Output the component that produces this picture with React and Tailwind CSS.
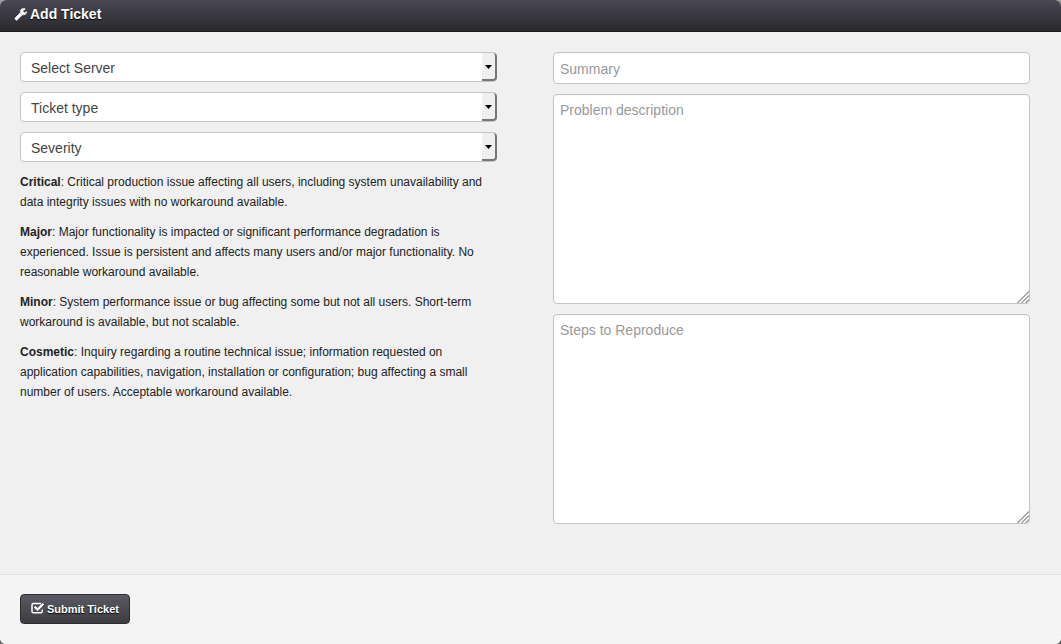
const severities = [
  ["Critical", "Critical production issue affecting all users, including system unavailability and data integrity issues with no workaround available."],
  ["Major", "Major functionality is impacted or significant performance degradation is experienced. Issue is persistent and affects many users and/or major functionality. No reasonable workaround available."],
  ["Minor", "System performance issue or bug affecting some but not all users. Short-term workaround is available, but not scalable."],
  ["Cosmetic", "Inquiry regarding a routine technical issue; information requested on application capabilities, navigation, installation or configuration; bug affecting a small number of users. Acceptable workaround available."],
];

function WrenchIcon() {
  return (
    <svg viewBox="0 0 1792 1792" className="size-3.5" fill="currentColor" aria-hidden="true">
      <path
        stroke="currentColor"
        strokeWidth="90"
        transform="translate(40 60) scale(0.92)"
        d="M1092 1052l-682 682q-37 37-90 37-52 0-91-37l-106-108q-38-36-38-90 0-53 38-91l681-681q39 98 114.5 173.5t173.5 114.5zm634-435q0 39-23 106-47 134-164.5 217.5t-258.5 83.5q-185 0-316.5-131.5t-131.5-316.5 131.5-316.5 316.5-131.5q58 0 121.5 16.5t107.5 46.5q16 11 16 28t-16 28l-293 169v224l193 107q5-3 79-48.5t135.5-81 70.5-35.5q15 0 23.5 10t8.5 25z"
      />
    </svg>
  );
}

function CheckIcon() {
  return (
    <svg viewBox="0 0 14 14" className="size-3.5" fill="none" stroke="currentColor" aria-hidden="true">
      <path d="M10 1.6H2.4Q1 1.6 1 3V9.4Q1 10.8 2.4 10.8H9.8Q11.2 10.8 11.2 9.4V7.4" strokeWidth="1.5" />
      <path d="M3.6 4.8L6.5 7.6L12.4 1.8" strokeWidth="2.2" />
    </svg>
  );
}

function SelectField({ label }) {
  return (
    <div className="relative">
      <select aria-label={label} className="block h-[30px] w-full appearance-none rounded border border-[#c4c4c4] bg-white pt-0.5 pr-6 pl-2.5 text-sm text-[#444]">
        <option>{label}</option>
      </select>
      <span className="pointer-events-none absolute inset-y-px right-0 flex w-[15px] items-center justify-center rounded-r-sm border-r-2 border-b-2 border-[#777] bg-[#efefef] pt-0.5">
        <svg viewBox="0 0 7 4" className="h-1 w-[7px]" fill="#000" aria-hidden="true">
          <path d="M0 0H7L3.5 4Z" />
        </svg>
      </span>
    </div>
  );
}

function TextArea({ label }) {
  return (
    <div className="relative">
      <textarea aria-label={label} placeholder={label} className="block h-[210px] w-full resize-none rounded border border-[#c4c4c4] bg-white px-1.5 py-[5px] text-sm leading-5 text-[#444] shadow-[inset_0_1px_1px_rgba(0,0,0,0.03)] placeholder:text-[#999]" />
      <svg viewBox="0 0 12 12" className="pointer-events-none absolute right-px bottom-px size-3" stroke="#999" strokeWidth="1.3" aria-hidden="true">
        <path d="M0.5 12L12 0.5M4.5 12L12 4.5M8.5 12L12 8.5" />
      </svg>
    </div>
  );
}

export default function App() {
  return (
    <div className="min-h-screen bg-linear-to-b from-[#a0a0a4] to-[#666]">
      <form className="flex min-h-screen flex-col overflow-hidden rounded-md bg-[#f0f0f0] font-['Liberation_Sans',Arial,sans-serif] text-[#222]">
        <header className="flex h-8 items-center gap-0.5 border-b border-[#1b1a20] bg-linear-to-b from-[#4a4854] to-[#29292d] px-3.5 pb-1 text-white">
          <WrenchIcon />
          <h1 className="text-sm font-bold [text-shadow:0_1px_1px_#000]">Add Ticket</h1>
        </header>
        <main className="grid grow grid-cols-2 gap-14 pt-5 pr-[31px] pb-[50px] pl-5">
          <div className="flex flex-col gap-2.5">
            <SelectField label="Select Server" />
            <SelectField label="Ticket type" />
            <SelectField label="Severity" />
            {severities.map(([name, text]) => (
              <p key={name} className="text-xs leading-5">
                <strong>{name}</strong>: {text}
              </p>
            ))}
          </div>
          <div className="flex flex-col gap-2.5">
            <input type="text" aria-label="Summary" placeholder="Summary" className="h-8 w-full rounded border border-[#c4c4c4] bg-white px-1.5 pt-0.5 text-sm text-[#444] shadow-[inset_0_1px_1px_rgba(0,0,0,0.03)] placeholder:text-[#999]" />
            <TextArea label="Problem description" />
            <TextArea label="Steps to Reproduce" />
          </div>
        </main>
        <footer className="border-t border-[#e0e0e0] bg-[#f4f4f4] px-5 pt-[19px] pb-5">
          <button type="submit" className="flex h-[30px] items-center gap-0.5 rounded border border-[#2b2b30] bg-linear-to-b from-[#5a5a62] to-[#3c3c41] px-2.5 text-[11px] font-bold text-white [text-shadow:0_1px_1px_#000]">
            <CheckIcon />
            Submit Ticket
          </button>
        </footer>
      </form>
    </div>
  );
}
